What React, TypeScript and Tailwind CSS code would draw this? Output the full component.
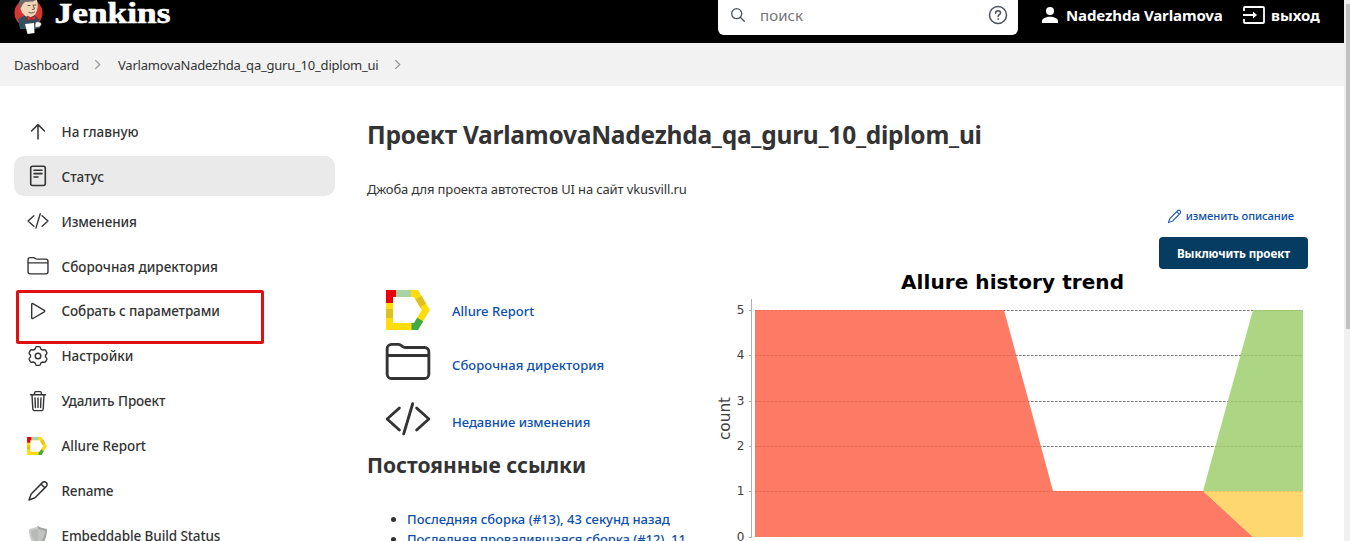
import type { ReactNode } from "react";

function FolderIcon({ className }: { className: string }) {
  return (
    <svg viewBox="0 0 512 512" className={className} fill="none" stroke="currentColor" strokeWidth="32" strokeLinecap="round" strokeLinejoin="round">
      <path d="M440 440H72a48 48 0 01-48-48V108a48 48 0 0148-48h75a48 48 0 0127 8l28 19a48 48 0 0027 8h211a48 48 0 0148 48v249a48 48 0 01-48 48zM24 184h464" />
    </svg>
  );
}

function CodeIcon({ className }: { className: string }) {
  return (
    <svg viewBox="0 0 512 512" className={className} fill="none" stroke="currentColor" strokeWidth="32" strokeLinecap="round" strokeLinejoin="round">
      <path d="M160 378L24 256l136-122M352 378l136-122-136-122M308 86l-100 336" />
    </svg>
  );
}

function AllureIcon({ className }: { className: string }) {
  return (
    <svg viewBox="0 0 44 40" className={className} fill="none" strokeWidth="7">
      <path d="M3.500 3.500H30L39.800 20L30 36.500H3.500z" stroke="#ffdc0a" />
      <path d="M3.500 19v9" stroke="#e0c01c" />
      <path d="M32.500 7.800l4.600 7.700" stroke="#e0c01c" />
      <path d="M3.500 13V3.500H10" stroke="#e8000d" />
      <path d="M10 3.500h15" stroke="#a8d3a5" />
      <path d="M25.500 36.500H30l4.200-7" stroke="#41aa46" />
    </svg>
  );
}

function PencilIcon({ className }: { className: string }) {
  return (
    <svg viewBox="0 0 22 22" className={className} fill="none" stroke="currentColor" strokeWidth="1.5" strokeLinejoin="round">
      <path d="M2 20l2.200-6L15.400 2.600c1-1 2.800-1 3.900 0s1 2.800 0 3.800L8 17.800z M14 4l4 4" />
    </svg>
  );
}

const thin = { fill: "none", stroke: "currentColor", strokeLinecap: "round", strokeLinejoin: "round" } as const;

const UpIcon = (
  <svg viewBox="0 0 22 22" className="h-[22px] w-[22px]" {...thin} strokeWidth="1.500">
    <path d="M11 18V4M4.500 10L11 3.600l6.500 6.400" />
  </svg>
);

const StatusIcon = (
  <svg viewBox="0 0 22 22" className="h-[22px] w-[22px]" {...thin} strokeWidth="1.600">
    <rect x="3.700" y="1.300" width="14.600" height="19.200" rx="2" />
    <path d="M7 5.200h8M7 8.600h8M7 12h4" />
  </svg>
);

const PlayIcon = (
  <svg viewBox="0 0 22 22" className="h-[22px] w-[22px]" {...thin} strokeWidth="1.400">
    <path d="M4.700 4.400v13.400c0 .7.6 1 1.200.7l11.400-6.600c.6-.4.6-1.200 0-1.600L5.900 3.700c-.6-.3-1.200 0-1.200.7z" />
  </svg>
);

const GearIcon = (
  <svg viewBox="0 0 22 22" className="h-[22px] w-[22px]" {...thin} strokeWidth="1.400">
    <circle cx="11" cy="11" r="2.800" />
    <path d="M9.600 1.600h2.800c.6 0 1 .6 1.200 1.700l.6 1 1.200.7c1.600-.4 2.700-.3 3.100.2l1.400 2.500c.3.700-.3 1.500-1.400 2.400v1.900c1.100.8 1.700 1.700 1.400 2.300l-1.400 2.500c-.4.600-1.500.6-3.100.2l-1.200.7-.6 1c-.2 1.100-.6 1.700-1.200 1.700H9.600c-.6 0-1-.6-1.200-1.700l-.6-1-1.200-.7c-1.600.4-2.700.4-3.100-.2l-1.400-2.500c-.3-.6.3-1.500 1.400-2.300v-1.900C2.400 9.200 1.800 8.400 2.100 7.700l1.400-2.500c.4-.5 1.500-.6 3.100-.2l1.200-.7.6-1c.2-1.100.6-1.700 1.200-1.700z" />
  </svg>
);

const TrashIcon = (
  <svg viewBox="0 0 22 22" className="h-[22px] w-[22px]" {...thin} strokeWidth="1.400">
    <path d="M3.500 4.700h15M5 5l.8 14c.1 1 .7 1.600 1.600 1.600h7.200c.9 0 1.500-.6 1.600-1.600L17 5M7.600 4.500V2.800c0-.7.5-1.200 1.200-1.200h4.400c.7 0 1.200.5 1.200 1.200v1.700M11 8v9.500M8 8l.4 9.500M14 8l-.4 9.500" />
  </svg>
);

const ShieldIcon = (
  <svg viewBox="0 0 22 22" className="h-[22px] w-[22px]">
    <path d="M11 1C8 3 5 3.500 2 4c0 8 2 14 9 17.500V1z" fill="#c9cac8" />
    <path d="M11 1C14 3 17 3.500 20 4c0 8-2 14-9 17.500z" fill="#a3a5a2" />
    <path d="M11 3.500C8.500 5 6.500 5.500 4 5.800c.4 5.700 2 10 7 13z" fill="#b7b9b6" />
    <path d="M11 3.500c2.500 1.500 4.500 2 7 2.300-.4 5.700-2 10-7 13z" fill="#c2c4c1" />
  </svg>
);

type Item = { label: string; icon: ReactNode; tracking: string; active?: boolean; marked?: boolean };

const items: Item[] = [
  { label: "На главную", icon: UpIcon, tracking: "tracking-[0px]" },
  { label: "Статус", icon: StatusIcon, tracking: "tracking-[0px]", active: true },
  { label: "Изменения", icon: <CodeIcon className="h-[22px] w-[22px]" />, tracking: "tracking-[-0.1px]" },
  { label: "Сборочная директория", icon: <FolderIcon className="h-[22px] w-[22px]" />, tracking: "tracking-[0px]" },
  { label: "Собрать с параметрами", icon: PlayIcon, tracking: "tracking-[-0.1px]", marked: true },
  { label: "Настройки", icon: GearIcon, tracking: "tracking-[-0.05px]" },
  { label: "Удалить Проект", icon: TrashIcon, tracking: "tracking-[-0.1px]" },
  { label: "Allure Report", icon: <AllureIcon className="h-[18px] w-5" />, tracking: "tracking-[-0.05px]" },
  { label: "Rename", icon: <PencilIcon className="h-[22px] w-[22px]" />, tracking: "tracking-[-0.2px]" },
  { label: "Embeddable Build Status", icon: ShieldIcon, tracking: "tracking-[-0.1px]" },
];

function Sidebar() {
  return (
    <nav className="flex w-[321px] shrink-0 flex-col gap-[4.9px] pt-[25px]">
      {items.map((item) => (
        <a
          key={item.label}
          className={`relative flex h-10 shrink-0 items-center rounded-[10px] pl-[13px] text-[13.5px] font-medium text-[#333] ${item.active ? "bg-[#eaeaea]" : ""}`}
        >
          <span className="flex w-[34.5px] items-center pt-[1px]">{item.icon}</span>
          <span className={`pt-[2px] whitespace-nowrap ${item.tracking}`}>{item.label}</span>
          {item.marked && <span className="absolute top-[-1px] left-[2px] h-[54px] w-[248px] rounded-[2px] border-[3px] border-[#e01010]" />}
        </a>
      ))}
    </nav>
  );
}

function JenkinsLogo() {
  return (
    <svg viewBox="0 0 180 43" className="h-[43px] w-[180px]">
      <circle cx="28.500" cy="13" r="14" fill="#d33833" />
      <path d="M18 19l7-4 9 0 5 4 1 9-5 1H20z" fill="#335061" />
      <path d="M20 0c-1 7 1 14 7 17 4 1 8-1 9.500-5C38 8 38 4 37 0z" fill="#f0d6b7" />
      <path d="M20 0c-1 3-1 6 0 9l2-3 1-6z" fill="#6d6b6d" />
      <path d="M22 0c3-1 10-1 14 0l-3 1.500-8 .5-3 3z" fill="#6d6b6d" />
      <path d="M28 5.500h2M34 5h2M33 5l1.500 4-2 .5M29 12.500c2 1 4 .5 5.500-.5" fill="none" stroke="#5a4639" strokeWidth=".9" strokeLinecap="round" />
      <path d="M27 16l4 1.500 4-1.500 1 4-4.500-1-4 2z" fill="#d33833" stroke="#81161b" strokeWidth=".5" />
      <path d="M25 24l9-1 .5 10-7 1z" fill="#fff" />
      <path d="M35 25c0-3 2-4 4-3 3 0 3 4 0 5l-4 .5z" fill="#f4f4f4" stroke="#444" strokeWidth=".6" />
      <text x="54.500" y="22.700" fill="#fff" stroke="#fff" strokeWidth=".6" fontFamily="Liberation Serif, serif" fontWeight="700" fontSize="30" textLength="116" lengthAdjust="spacingAndGlyphs">Jenkins</text>
    </svg>
  );
}

function Header() {
  return (
    <header className="flex h-[43px] shrink-0 items-start bg-black text-white">
      <JenkinsLogo />
      <div className="ml-[538px] flex h-[35px] w-[300px] items-start rounded-b-[6px] bg-white pl-[13px] text-[#4d545d]">
        <svg viewBox="0 0 14 14" className="mt-[8px] h-[14px] w-[14px]" {...thin} strokeWidth="1.300">
          <circle cx="5.700" cy="5.700" r="5" />
          <path d="M9.300 9.300l4 4" />
        </svg>
        <span className="ml-[15px] pt-[5px] text-[15px] leading-[21px] tracking-[0.1px] text-[#757575]">поиск</span>
        <svg viewBox="0 0 20 20" className="mt-[5px] mr-[10px] ml-auto h-5 w-5" {...thin} strokeWidth="1.500">
          <circle cx="10" cy="10" r="8.500" />
          <path d="M7.600 8.200c0-1.700 1-2.500 2.400-2.500s2.500.9 2.500 2.300c0 1.700-2.400 1.700-2.400 3.500" />
          <circle cx="10.100" cy="14" r=".5" fill="currentColor" strokeWidth=".7" />
        </svg>
      </div>
      <svg viewBox="0 0 16 16" className="mt-[7px] ml-[24px] h-4 w-4" fill="#fff">
        <circle cx="8" cy="4" r="4" />
        <path d="M0 16v-2c0-2.700 4-4.300 8-4.300s8 1.600 8 4.300v2z" />
      </svg>
      <span className="ml-[8px] w-[169px] pt-[5px] text-[15px] leading-[21px] font-bold tracking-[-0.12px] whitespace-nowrap">Nadezhda Varlamova</span>
      <svg viewBox="0 0 22 18" className="mt-[6px] ml-[8px] w-[22px]" fill="none" stroke="#fff" strokeWidth="1.800">
        <path d="M1 5V2q0-1 1-1h18q1 0 1 1v14q0 1-1 1H2q-1 0-1-1v-3M0 9h12" />
        <path d="M10 5.500L14 9l-4 3.500z" fill="#fff" stroke="none" />
      </svg>
      <span className="ml-[6px] pt-[5px] text-[15px] leading-[21px] font-bold whitespace-nowrap">выход</span>
    </header>
  );
}

function Chevron() {
  return (
    <svg viewBox="0 0 8 12" className="h-[11px] w-[7px] shrink-0" fill="none" stroke="#999" strokeWidth="1.500">
      <path d="M1.500 1l5 5-5 5" />
    </svg>
  );
}

function Breadcrumbs() {
  return (
    <div className="flex h-[43px] shrink-0 items-center bg-[#f2f2f2] pl-[14px] text-[13px] text-[#333]">
      <span className="w-[80px] pt-[2px] tracking-[-0.25px] whitespace-nowrap">Dashboard</span>
      <Chevron />
      <span className="ml-[17px] w-[276px] pt-[2px] tracking-[-0.22px] whitespace-nowrap">VarlamovaNadezhda_qa_guru_10_diplom_ui</span>
      <Chevron />
    </div>
  );
}

const ticks = [
  { n: 5, y: 310.5 },
  { n: 4, y: 355.5 },
  { n: 3, y: 401.5 },
  { n: 2, y: 446.5 },
  { n: 1, y: 491.5 },
  { n: 0, y: 537.5 },
];

function TrendChart() {
  return (
    <svg viewBox="715 269 593 280" className="h-[280px] w-[593px]" fontFamily="DejaVu Sans, sans-serif">
      <text x="1012.500" y="289" textAnchor="middle" fontSize="20" fontWeight="700" fill="#000" textLength="223">Allure history trend</text>
      <text transform="translate(729.500 418.500) rotate(-90)" textAnchor="middle" fontSize="15.300" fill="#404040">count</text>
      {ticks.map((t) => (
        <g key={t.n}>
          <text x="744.500" y={t.y + 3.5} textAnchor="end" fontSize="12" fill="#404040">{t.n}</text>
          <path d={`M749 ${t.y}h3`} stroke="#b0b0b0" />
          {t.n > 0 && <path d={`M755 ${t.y}h548`} stroke="#777" strokeDasharray="2.500 1.500" />}
        </g>
      ))}
      <path d="M751.500 299v239" stroke="#b0b0b0" />
      <path d="M755 310h249l49 181h150l50 46H755z" fill="#fd6449" fillOpacity=".85" />
      <path d="M1203 491h100v46h-50z" fill="#ffd056" fillOpacity=".85" />
      <path d="M1203 491l50-181h50v181z" fill="#9ecf6d" fillOpacity=".85" />
    </svg>
  );
}

function Main() {
  return (
    <main className="ml-[32px] w-[941px] shrink-0 text-[#333]">
      <h1 className="mt-[31px] h-[36px] text-[24.5px] leading-[36px] font-bold tracking-[-0.24px] whitespace-nowrap">Проект VarlamovaNadezhda_qa_guru_10_diplom_ui</h1>
      <p className="mt-[26px] h-5 text-[13px] leading-5 tracking-[-0.13px] whitespace-nowrap">Джоба для проекта автотестов UI на сайт vkusvill.ru</p>
      <div className="mt-[6px] flex">
        <section className="w-[348px] shrink-0 pt-[84px] text-[13px] font-medium text-[#0b4fad]">
          <div className="flex h-[42px] items-center pl-[19px]">
            <AllureIcon className="h-[40px] w-[44px]" />
            <span className="ml-[22px] pt-[4px] tracking-[0.03px]">Allure Report</span>
          </div>
          <div className="mt-[10px] flex h-[42px] items-center pl-[18px]">
            <FolderIcon className="h-[46px] w-[46px] text-[#333]" />
            <span className="ml-[21px] pt-[8px] tracking-[0.08px] whitespace-nowrap">Сборочная директория</span>
          </div>
          <div className="mt-[15px] flex h-[42px] items-center pl-[18px]">
            <CodeIcon className="h-[46px] w-[46px] text-[#333]" />
            <span className="ml-[21px] pt-[8px] tracking-[-0.02px] whitespace-nowrap">Недавние изменения</span>
          </div>
          <h2 className="mt-[11px] h-[28px] text-[21px] leading-[28px] font-bold whitespace-nowrap text-[#333]">Постоянные ссылки</h2>
          <ul className="mt-[30px] list-disc pl-[40px] leading-[20px] marker:text-[#333]">
            <li className="whitespace-nowrap">Последняя сборка (#13), 43 секунд назад</li>
            <li className="tracking-[-0.06px] whitespace-nowrap">Последняя провалившаяся сборка (#12), 11</li>
          </ul>
        </section>
        <section className="flex w-[593px] shrink-0 flex-col items-end">
          <a className="mt-[1px] mr-[14px] flex h-[20px] items-center text-[11.2px] font-medium text-[#0b4fad]">
            <PencilIcon className="mr-[4px] h-[15px] w-[15px]" />
            <span className="tracking-[-0.08px] whitespace-nowrap">изменить описание</span>
          </a>
          <button className="mt-[11px] h-[32px] w-[149px] rounded-[4px] bg-[#063c61] pt-[2px] text-[11.6px] font-bold tracking-[-0.1px] whitespace-nowrap text-white">Выключить проект</button>
          <TrendChart />
        </section>
      </div>
    </main>
  );
}

export default function App() {
  return (
    <div className="flex h-[541px] w-[1350px] overflow-hidden bg-white font-['Noto_Sans',sans-serif]">
      <div className="flex w-[1344px] shrink-0 flex-col">
        <Header />
        <Breadcrumbs />
        <div className="flex min-h-0 flex-1 pl-[14px]">
          <Sidebar />
          <Main />
        </div>
      </div>
      <div className="w-[6px] shrink-0 bg-[#f0f0f0] pt-[4px] pl-[2px]">
        <div className="h-[325px] bg-[#c1c1c1]" />
      </div>
    </div>
  );
}
